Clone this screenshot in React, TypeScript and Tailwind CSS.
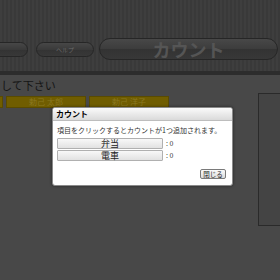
import React from "react";

export default function App() {
  return (
    <div
      className="relative w-[280px] h-[280px] overflow-hidden bg-[#484848]"
      style={{ fontFamily: '"Noto Sans CJK JP", "Noto Sans", sans-serif' }}
    >
      {/* header */}
      <div className="h-[71px] bg-[#3c3c3c] bg-[repeating-linear-gradient(90deg,#3e3e3e_0px,#3e3e3e_2px,#393939_2px,#393939_4px)] relative">
        <div className="absolute left-[-30px] top-[42px] w-[58px] h-[15px] rounded-full border border-[#262626] bg-[linear-gradient(#474747,#3a3a3a_50%,#333333_50%,#383838)]" />
        <div className="absolute left-[36px] top-[42px] w-[58px] h-[15px] rounded-full border border-[#262626] bg-[linear-gradient(#474747,#3a3a3a_50%,#333333_50%,#383838)] flex items-center justify-center">
          <span className="text-[6px] leading-none text-[#6a6a6a]">ヘルプ</span>
        </div>
        <div className="absolute left-[99px] top-[38px] w-[179px] h-[22px] rounded-full border border-[#262626] bg-[linear-gradient(#484848,#3c3c3c_50%,#333333_50%,#383838)] flex items-center justify-center">
          <span className="text-[18px] font-bold leading-none text-[#555555]">カウント</span>
        </div>
      </div>
      <div className="h-[4px] bg-[#2c2c2c]" />

      {/* content */}
      <div className="pt-[3px]">
        <div className="text-[11px] leading-[14px] text-[#151515] pl-[1px]">して下さい</div>
        <div className="flex gap-[3px] mt-[4px] ml-[-77px]">
          {["", "勅己 太郎", "勅己 洋子"].map((n, i) => (
            <div
              key={i}
              className="w-[80px] h-[12px] bg-[#705d00] border border-[#5a4b00] flex items-center justify-center text-[8px] leading-none text-[#8a7820]"
            >
              {n}
            </div>
          ))}
        </div>
      </div>

      {/* right panel */}
      <div className="absolute left-[258px] top-[93px] w-[30px] h-[133px] border border-[#2a2a2a] bg-[#444444]" />

      {/* dialog */}
      <div className="absolute left-[52px] top-[107px] w-[181px] h-[79px] bg-white rounded-[3px] border border-[#8a8a8a] shadow-[0_0_3px_rgba(0,0,0,0.5)] overflow-hidden">
        <div className="h-[13px] border-b border-[#bdbdbd] bg-[linear-gradient(#fafafa,#dadada)] flex items-center pl-[3px]">
          <span className="text-[8px] font-bold leading-none text-black">カウント</span>
        </div>
        <div className="pl-[4px] pr-[2px]">
          <div className="mt-[5px] text-[7px] leading-[9px] text-[#333333] whitespace-nowrap">
            項目をクリックするとカウントが1つ追加されます。
          </div>
          <div className="mt-[3px] flex flex-col gap-[1px]">
            {["弁当", "電車"].map((t) => (
              <div key={t} className="flex items-center">
                <div className="w-[106px] h-[11px] border border-[#b0b0b0] rounded-[1px] bg-[linear-gradient(#f8f8f8,#e2e2e2)] flex items-center justify-center text-[9px] leading-none text-[#222222]">
                  {t}
                </div>
                <span className="ml-[3px] text-[7px] leading-none text-[#333333]">: 0</span>
              </div>
            ))}
          </div>
          <div className="flex justify-end mt-[8px] pr-[4px]">
            <div className="w-[26px] h-[10px] border border-[#7a7a7a] rounded-[2px] bg-[linear-gradient(#fafafa,#dcdcdc)] flex items-center justify-center text-[6.5px] leading-none text-[#222222]">
              閉じる
            </div>
          </div>
        </div>
      </div>
    </div>
  );
}
